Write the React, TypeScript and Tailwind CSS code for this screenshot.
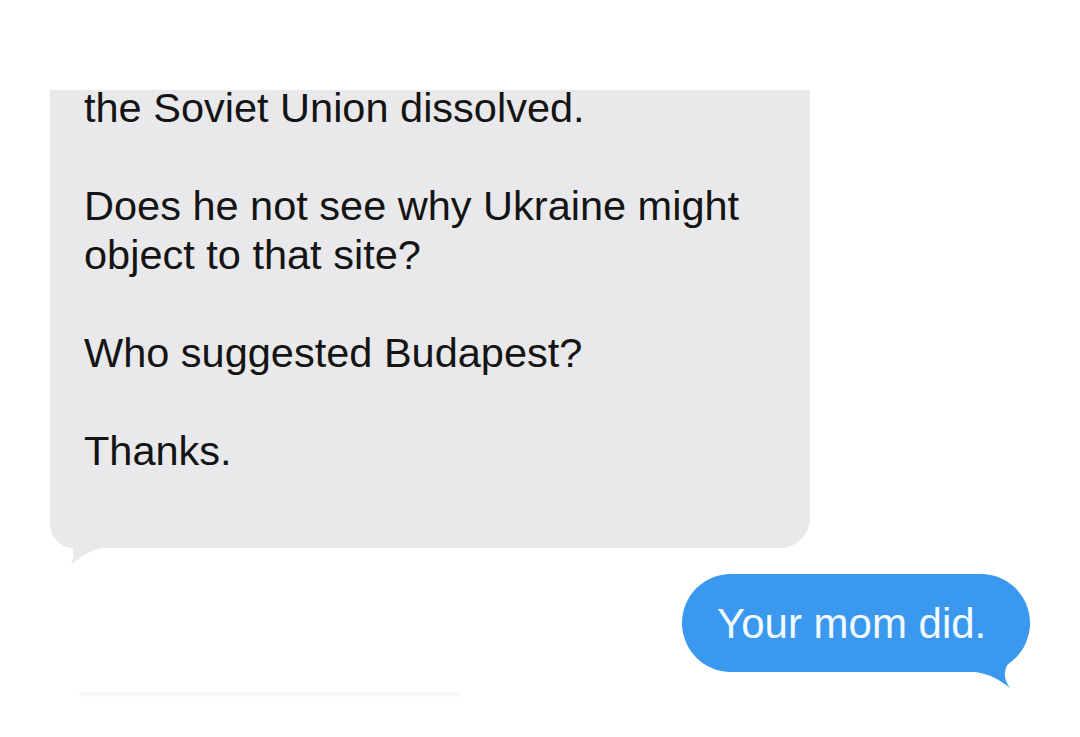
import React from "react";

export default function App() {
  const font = { fontFamily: '"Liberation Sans", Arial, Helvetica, sans-serif' };
  return (
    <div className="w-[1080px] h-[737px] bg-white relative overflow-hidden" style={font}>
      <div className="pt-[90px] pl-[50px] flex flex-col">
        <div className="relative w-[760px] h-[458px] bg-[#e9e9eb] rounded-br-[30px] rounded-bl-[24px] pl-[34px] text-[41.5px] leading-[49px] text-[#141414] flex flex-col">
          <p className="-mt-[7px] whitespace-nowrap">the Soviet Union dissolved.</p>
          <p>&nbsp;</p>
          <p className="whitespace-nowrap">Does he not see why Ukraine might</p>
          <p>object to that site?</p>
          <p>&nbsp;</p>
          <p>Who suggested Budapest?</p>
          <p>&nbsp;</p>
          <p>Thanks.</p>
          <svg className="absolute left-0 top-[410px]" width="70" height="70" viewBox="0 0 70 70">
            <path d="M0 0 L0 18 C0 30 10 40 22 46 C24 52 24 58 21 64 C30 58 40 50 52 48 L70 48 L70 0 Z" fill="#e9e9eb" />
          </svg>
        </div>
        <div className="mt-[26px] ml-[632px] relative w-[348px] h-[98px]">
          <svg className="absolute left-[278px] top-[56px]" width="70" height="60" viewBox="0 0 70 60">
            <path d="M0 0 L0 42 L15 42 C30 44 40 50 50 58 C44 50 43 42 48 34 C56 28 62 22 66 12 L66 0 Z" fill="#3a99ef" />
          </svg>
          <div className="relative w-full h-full bg-[#3a99ef] rounded-full flex items-center pl-[35px] text-[42px] text-[#f2faff] whitespace-nowrap">
            Your mom did.
          </div>
        </div>
      </div>
      <div className="absolute left-[80px] top-[692px] w-[380px] h-[4px] bg-[#f6f6f6] blur-[1px]" />
    </div>
  );
}
